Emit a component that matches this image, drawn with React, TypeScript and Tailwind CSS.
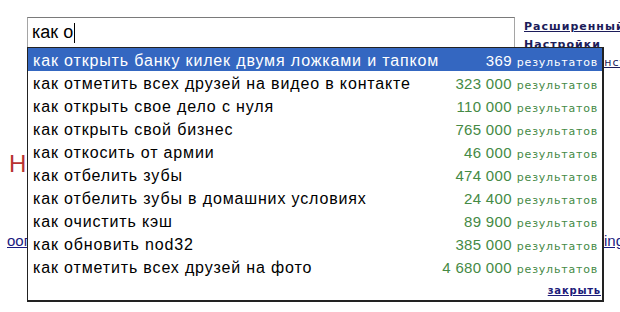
import React from "react";

const rows: [string, string][] = [
  ["как открыть банку килек двумя ложками и тапком", "369"],
  ["как отметить всех друзей на видео в контакте", "323 000"],
  ["как открыть свое дело с нуля", "110 000"],
  ["как открыть свой бизнес", "765 000"],
  ["как откосить от армии", "46 000"],
  ["как отбелить зубы", "474 000"],
  ["как отбелить зубы в домашних условиях", "24 400"],
  ["как очистить кэш", "89 900"],
  ["как обновить nod32", "385 000"],
  ["как отметить всех друзей на фото", "4 680 000"],
];

const sans = "font-['Liberation_Sans',Arial,sans-serif]";
const small = "font-['DejaVu_Sans',Verdana,sans-serif]";

export default function App() {
  return (
    <div className={`relative h-[312px] w-[620px] overflow-hidden bg-white ${sans}`}>
      {/* page behind the suggest box */}
      <div className="flex pl-[27px] pt-[17px]">
        <div className="flex h-[31px] w-[488px] shrink-0 items-center border border-[#a5a5a5] border-t-[#7a7a7a] pl-[4px] text-[18px] text-black">
          как о<span className="ml-px h-[20px] w-px bg-black" />
        </div>
        <div className={`ml-[9px] flex flex-col pt-[1px] text-[11px] font-bold leading-[18px] tracking-[1px] text-[#1c1c5a] ${small}`}>
          <span className="whitespace-nowrap underline">Расширенный поиск</span>
          <span className="whitespace-nowrap">Настройки</span>
          <span className="ml-[71px] whitespace-nowrap font-normal underline">Инструменты</span>
        </div>
      </div>
      <div className="pl-[9px] pt-[80px] text-[24px] leading-none text-[#b83232]">Н</div>
      <div className="flex justify-between pt-[57px] text-[15px] leading-none text-[#1a1a80]">
        <span className="ml-[7px] underline">оог</span>
        <span className="-mr-[4px] underline">ing</span>
      </div>

      {/* suggest dropdown */}
      <div className="absolute left-[27px] top-[47px] w-[577px] border border-[#222] border-b-2 border-r-2 bg-white">
        {rows.map(([q, n], i) => (
          <div
            key={q}
            className={`flex h-[23px] items-center justify-between pl-[5px] pr-[4px] pt-[3px] ${
              i === 0 ? "bg-[#3467c1] text-white" : "text-black"
            }`}
          >
            <span className="text-[16px] leading-none tracking-[0.85px]">{q}</span>
            <span className={`flex items-baseline ${i === 0 ? "text-white" : "text-[#458a45]"}`}>
              <span className="text-[15px] tracking-[0.3px]">{n}</span>
              <span className={`ml-[5px] text-[11px] tracking-[0.8px] ${small}`}>результатов</span>
            </span>
          </div>
        ))}
        <div className="flex h-[22px] items-center justify-end pr-[1px] pt-[3px]">
          <span className={`text-[10px] font-bold tracking-[0.8px] text-[#1c1c7a] underline ${small}`}>закрыть</span>
        </div>
      </div>
    </div>
  );
}
